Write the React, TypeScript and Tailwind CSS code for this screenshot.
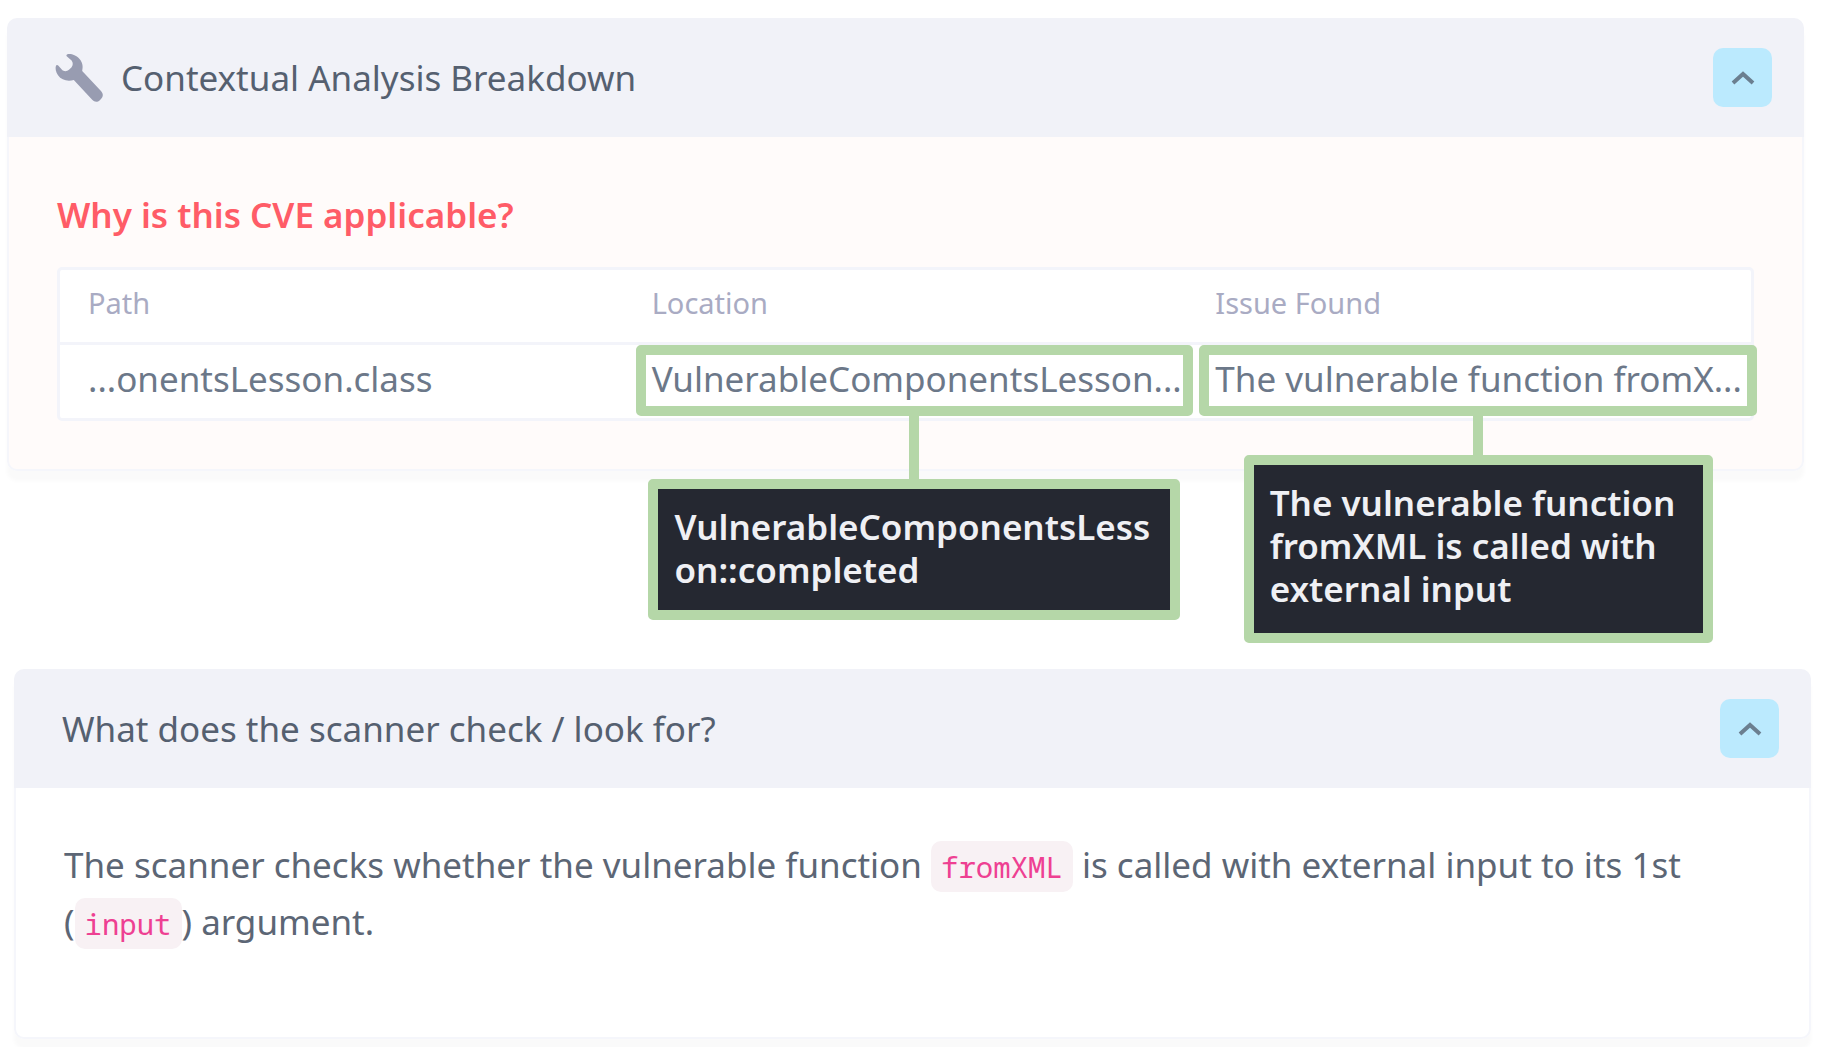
import React, { useState } from "react";

interface Finding {
  path: string;
  location: string;
  locationFull: string;
  issue: string;
  issueFull: string;
}

const findings: Finding[] = [
  {
    path: "...onentsLesson.class",
    location: "VulnerableComponentsLesson...",
    locationFull: "VulnerableComponentsLesson::completed",
    issue: "The vulnerable function fromX...",
    issueFull: "The vulnerable function fromXML is called with external input",
  },
];

function WrenchIcon() {
  return (
    <svg width="50" height="50" viewBox="0 0 50 50" className="text-[#989cb1]">
      <path
        fill="currentColor"
        d="M12 1.5C13.5 0.6 17 1 19.5 2.2C25 4.8 28 9.5 27.6 14.5L27.2 18L46.2 38.2C48.4 40.6 48.4 43.6 46.2 45.8L44.8 47.2C42.4 49.4 39.4 49.2 37.2 46.8L18.8 27C12.5 28.6 6.5 27.2 3 22.2C0.8 19 0 15.4 1 12.6C1.6 11.6 2.6 11.7 3.2 12.5L7 16.8C9 18.8 12 18.6 14 16.8L16.4 14.4C18.2 12.4 18.2 9.6 16.6 7.6L12 3.6C11.2 2.8 11.2 2 12 1.5Z"
      />
    </svg>
  );
}

interface PanelProps {
  title: string;
  icon?: React.ReactNode;
  className?: string;
  bodyClassName?: string;
  children: React.ReactNode;
}

function Panel({ title, icon, className = "", bodyClassName = "", children }: PanelProps) {
  const [open, setOpen] = useState(true);

  return (
    <section className={`rounded-[10px] shadow-[0_10px_4px_rgba(40,60,50,0.025)] ${className}`}>
      <header className="flex h-[119px] items-center justify-between rounded-t-[10px] bg-[#f1f2f8] pr-8 pl-12">
        <h2 className="flex items-center gap-4 text-[35px] leading-[48px] text-[#556070]">
          {icon}
          {title}
        </h2>
        <button
          type="button"
          aria-label={`Toggle ${title}`}
          aria-expanded={open}
          onClick={() => setOpen(!open)}
          className="flex size-[59px] items-center justify-center rounded-[10px] bg-[#bbeafe] text-[#6b7f90]"
        >
          <svg width="24" height="14" viewBox="0 0 24 14" fill="none" stroke="currentColor" strokeWidth="4" className={open ? "" : "rotate-180"}>
            <path d="M2 12L12 3L22 12" />
          </svg>
        </button>
      </header>
      {open && <div className={`rounded-b-[10px] border-2 border-t-0 border-[#f5f6fb] ${bodyClassName}`}>{children}</div>}
    </section>
  );
}

interface CalloutProps {
  text: string;
  lineClassName: string;
  tipClassName: string;
}

// green frame over a cell with the full text hanging below it
function Callout({ text, lineClassName, tipClassName }: CalloutProps) {
  return (
    <div className="absolute inset-y-0 -right-1.5 left-3 z-10 flex flex-col items-center">
      <div className="h-[71px] w-full shrink-0 rounded-[5px] border-10 border-[#b5d7a8]" />
      <div className={`w-[10px] shrink-0 bg-[#b5d7a8] ${lineClassName}`} />
      <div
        role="tooltip"
        className={`shrink-0 rounded-[5px] border-10 border-[#b5d7a8] bg-[#b5d7a8] text-[35px] leading-[43px] font-semibold whitespace-normal text-[#eff0f4] ${tipClassName}`}
      >
        <div className="h-full bg-[#252831] pt-4 pl-4">{text}</div>
      </div>
    </div>
  );
}

function Code({ children }: { children: React.ReactNode }) {
  return (
    <code className="rounded-[10px] bg-[#f8f1f4] px-2.5 py-1.5 font-['Noto_Sans_Mono','DejaVu_Sans_Mono',monospace] text-[29px] leading-none text-[#ee4092]">
      {children}
    </code>
  );
}

export default function App() {
  return (
    <main className="flex min-h-screen flex-col gap-[198px] bg-white pt-[18px] pr-5 pl-[7px] font-['Noto_Sans','Open_Sans',sans-serif]">
      <Panel
        title="Contextual Analysis Breakdown"
        icon={<WrenchIcon />}
        className="mr-[7px]"
        bodyClassName="bg-[#fffbfa] px-12 pt-[54px] pb-12"
      >
        <h3 className="mb-7 text-[35px] leading-[48px] font-semibold text-[#ff5c67]">Why is this CVE applicable?</h3>
        <div className="rounded-[5px] border-3 border-[#f3f4fa] bg-white">
          <table className="w-full table-fixed text-left">
            <thead>
              <tr className="h-[73px] border-b-3 border-[#f3f4fa] text-[29px] text-[#a9abc3]">
                <th className="pb-1.5 pl-7 font-normal">Path</th>
                <th className="pb-1.5 pl-7 font-normal">Location</th>
                <th className="pb-1.5 pl-7 font-normal">Issue Found</th>
              </tr>
            </thead>
            <tbody>
              {findings.map((f) => (
                <tr key={f.location} className="h-[75px] text-[35px] leading-[48px] whitespace-nowrap text-[#6c7889]">
                  <td className="pb-1 pl-7">{f.path}</td>
                  <td className="relative pb-1 pl-7">
                    {f.location}
                    <Callout text={f.locationFull} lineClassName="h-[63px]" tipClassName="h-[141px] w-[532px] break-all" />
                  </td>
                  <td className="relative pb-1 pl-7">
                    {f.issue}
                    <Callout text={f.issueFull} lineClassName="h-[39px]" tipClassName="h-[188px] w-[469px]" />
                  </td>
                </tr>
              ))}
            </tbody>
          </table>
        </div>
      </Panel>

      <Panel title="What does the scanner check / look for?" className="ml-[7px]" bodyClassName="bg-white px-12 pt-12 pb-[87px]">
        <p className="text-[35px] leading-[57px] text-[#5c6675]">
          The scanner checks whether the vulnerable function <Code>fromXML</Code> is called with external input to its 1st
          (<Code>input</Code>) argument.
        </p>
      </Panel>
    </main>
  );
}
